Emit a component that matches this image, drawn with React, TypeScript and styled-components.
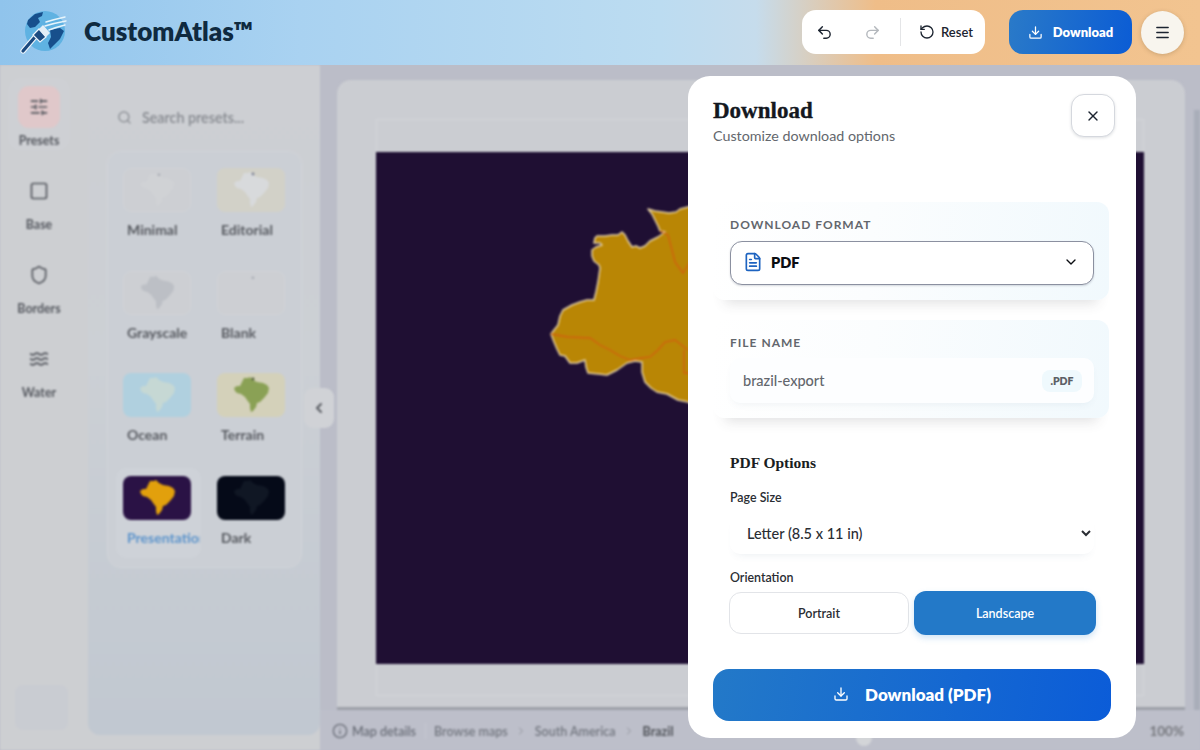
import React from "react";
import styled, { createGlobalStyle } from "styled-components";
import {
  ChevronDown, ChevronLeft, ChevronRight, Download, FileText, Info, Menu, Redo2, RotateCcw,
  Search, Shield, SlidersHorizontal, Square, Undo2, Waves, X,
} from "lucide-react";

const UI = `Lato, "Open Sans", sans-serif`;
const SERIF = `"Liberation Serif", "DejaVu Serif", serif`;

const Global = createGlobalStyle`
  html, body { margin: 0; padding: 0; overflow: hidden; }
  body { font-family: ${UI}; }
  * { box-sizing: border-box; }
`;

const Page = styled.div`
  position: relative;
  width: 1200px;
  height: 750px;
  overflow: hidden;
  display: flex;
  flex-direction: column;
  background: #bbbdc8;
`;

/* ---------- header ---------- */
const Header = styled.header`
  position: relative;
  z-index: 3;
  flex: 0 0 65px;
  display: flex;
  align-items: center;
  padding: 0 16px 1px 20px;
  background: linear-gradient(90deg, #90c4ec 0%, #a9d2f1 25%, #bcdcf1 55%, #c6dcec 63%, #efbd88 73%, #f2c490 100%);
`;
const Brand = styled.div`
  display: flex;
  align-items: center;
  gap: 17px;
  flex: 1;
`;
const Title = styled.span`
  margin-top: -2px;
  font-size: 26px;
  font-weight: 800;
  color: #0f2a40;
`;
const ToolGroup = styled.div`
  display: flex;
  align-items: center;
  width: 183px;
  height: 44px;
  background: #fff;
  border-radius: 14px;
  margin-right: 24px;
  color: #1c2430;
`;
const ToolIcon = styled.span<{ $dim?: boolean }>`
  display: flex;
  justify-content: center;
  width: 44px;
  margin-right: 4px;
  color: ${(p) => (p.$dim ? "#b4b8bd" : "#1c2430")};
`;
const ToolDivider = styled.span`
  width: 1px;
  height: 28px;
  background: #e4e5e7;
  margin: 0 18px 0 2px;
`;
const ResetLabel = styled.span`
  font-size: 13px;
  font-weight: 600;
  margin-left: 6px;
`;
const PrimaryButton = styled.button`
  display: flex;
  align-items: center;
  justify-content: center;
  gap: 10px;
  width: 123px;
  height: 44px;
  border: 0;
  border-radius: 14px;
  color: #fff;
  font: 800 13px ${UI};
  background: linear-gradient(100deg, #2a7ac8, #0b5cd5);
`;
const MenuButton = styled.button`
  display: flex;
  align-items: center;
  justify-content: center;
  width: 43px;
  height: 43px;
  margin-left: 9px;
  border: 0;
  border-radius: 50%;
  color: #1c2430;
  background: #f8f5ee;
  box-shadow: 0 1px 4px rgba(90, 70, 40, 0.25);
`;

/* ---------- blurred workspace ---------- */
const Workspace = styled.div`
  flex: 1;
  display: flex;
  min-height: 0;
  filter: blur(1.25px);
`;
const Sidebar = styled.aside`
  position: relative;
  flex: 0 0 320px;
  display: flex;
  background: #cdcfd2;
`;
const Rail = styled.nav`
  flex: 0 0 88px;
  display: flex;
  flex-direction: column;
  padding: 13px 8px 0 8px;
`;
const RailItem = styled.div<{ $active?: boolean }>`
  display: flex;
  flex-direction: column;
  align-items: center;
  width: 62px;
  height: 72px;
  margin-bottom: 12px;
  padding-top: 8px;
  border-radius: 12px;
  color: #55585f;
  background: ${(p) => (p.$active ? "#ced0d4" : "transparent")};
`;
const RailIcon = styled.span<{ $active?: boolean }>`
  display: flex;
  align-items: center;
  justify-content: center;
  width: 42px;
  height: 42px;
  border-radius: 11px;
  background: ${(p) => (p.$active ? "#e0c8ca" : "transparent")};
`;
const RailLabel = styled.span`
  margin-top: 5px;
  font-size: 12.4px;
  font-weight: 700;
  color: #55585f;
`;
const RailFoot = styled.div`
  position: absolute;
  left: 15px;
  bottom: 20px;
  width: 53px;
  height: 45px;
  border-radius: 8px;
  background: #c9ccd2;
`;
const PresetPanel = styled.section`
  flex: 0 0 232px;
  height: 670px;
  padding: 41px 18px 0 19px;
  border-radius: 0 0 12px 12px;
  background: linear-gradient(180deg, #cdcfd3 0%, #ccd0d5 45%, #c1c8d1 100%);
`;
const SearchRow = styled.div`
  display: flex;
  align-items: center;
  gap: 10px;
  height: 22px;
  padding-left: 10px;
  font-size: 14.3px;
  font-weight: 600;
  color: #85888e;
`;
const PresetCard = styled.div`
  display: grid;
  grid-template-columns: 94px 94px;
  grid-auto-rows: 102.7px;
  width: 195px;
  height: 417px;
  margin-top: 23px;
  padding: 8px 0 0 8px;
  border: 1px solid #d1d4d9;
  border-radius: 14px;
  background: #cbcfd5;
`;
const Tile = styled.div<{ $active?: boolean }>`
  width: 85px;
  height: 90px;
  padding: 8px 0 0 7px;
  border-radius: 10px;
  overflow: hidden;
  background: ${(p) => (p.$active ? "#ced2d8" : "transparent")};
`;
const Thumb = styled.svg<{ $bg: string; $outlined?: boolean }>`
  display: block;
  width: 68px;
  height: 44px;
  border-radius: 8px;
  background: ${(p) => p.$bg};
  border: ${(p) => (p.$outlined ? "1px solid #d1d3d7" : "0")};
`;
const TileLabel = styled.div<{ $active?: boolean }>`
  width: 73px;
  margin: 9px 0 0 4px;
  overflow: hidden;
  white-space: nowrap;
  font-size: 14px;
  font-weight: 700;
  color: ${(p) => (p.$active ? "#5b93cb" : "#575a60")};
`;
const CollapseHandle = styled.div`
  position: absolute;
  left: 304px;
  top: 323px;
  z-index: 1;
  width: 30px;
  height: 40px;
  display: flex;
  align-items: center;
  justify-content: center;
  border-radius: 9px;
  color: #585b62;
  background: #d0d2d6;
`;

const Stage = styled.main`
  flex: 1;
  display: flex;
  flex-direction: column;
  min-width: 0;
`;
const StageRow = styled.div`
  flex: 1;
  display: flex;
  min-height: 0;
  padding: 15px 0 0 17px;
`;
const CanvasPanel = styled.div`
  width: 848px;
  height: 630px;
  padding: 39px 0 0 39px;
  border-radius: 14px 14px 0 0;
  border-bottom: 3px solid #9da0a8;
  background: #cbcdd2;
`;
const Paper = styled.div`
  width: 768px;
  height: 577px;
  padding-top: 32px;
  border: 1px solid #d3d5d9;
`;
const MapSvg = styled.svg`
  display: block;
  width: 768px;
  height: 512px;
  margin-left: -1px;
  background: #1f0f33;
`;
const ScrollStrip = styled.div`
  width: 6px;
  height: 620px;
  margin: 30px 0 0 9px;
  background: #a9aeb9;
`;
const StatusBar = styled.footer`
  position: relative;
  flex: 0 0 40px;
  display: flex;
  align-items: center;
  padding: 2px 16px 0 12px;
  font-size: 12.5px;
  font-weight: 600;
  color: #6a6e78;
  background: #bdbfca;
`;
const Crumb = styled.span<{ $strong?: boolean }>`
  color: ${(p) => (p.$strong ? "#505359" : "#72767f")};
  font-weight: ${(p) => (p.$strong ? 700 : 600)};
`;
const CrumbSep = styled.span`
  display: flex;
  margin: 0 7.5px;
  color: #92959d;
`;
const MapDetails = styled.span`
  display: flex;
  align-items: center;
  gap: 4px;
  padding-right: 9px;
  margin-right: 8px;
  border-right: 1px solid #c6c8d1;
`;
const ZoomValue = styled.span`
  margin-left: auto;
  font-size: 13.5px;
  font-weight: 700;
  color: #77797f;
`;
const ZoomThumb = styled.span`
  position: absolute;
  left: 536px;
  top: 20px;
  width: 16px;
  height: 16px;
  border-radius: 50%;
  background: #d3d5d8;
`;

/* ---------- modal ---------- */
const Backdrop = styled.div`
  position: absolute;
  z-index: 2;
  inset: 65px 0 0 0;
  display: flex;
  justify-content: flex-end;
  align-items: flex-start;
  padding: 11px 64px 0 0;
`;
const Modal = styled.div`
  width: 448px;
  height: 662px;
  display: flex;
  flex-direction: column;
  border-radius: 22px;
  background: #fff;
  overflow: hidden;
`;
const ModalHead = styled.div`
  flex: 0 0 100px;
  display: flex;
  justify-content: space-between;
  padding: 18px 21px 0 25px;
`;
const ModalTitle = styled.h2`
  margin: 2px 0 0;
  font: 700 23px/30px ${SERIF};
  color: #14181f;
  -webkit-text-stroke: 0.35px #14181f;
`;
const ModalSub = styled.p`
  margin: 1px 0 0;
  font-size: 14.3px;
  line-height: 18px;
  color: #63676d;
`;
const CloseButton = styled.button`
  display: flex;
  align-items: center;
  justify-content: center;
  width: 44px;
  height: 43px;
  border: 1px solid #d5d8de;
  border-radius: 13px;
  color: #1c2430;
  background: #fff;
  box-shadow: 0 1px 3px rgba(30, 40, 60, 0.14);
`;
const ModalBody = styled.div`
  flex: 1;
  min-height: 0;
  overflow: hidden;
  padding: 26px 27px 0 25px;
`;
const FieldCard = styled.section`
  height: 98px;
  margin-bottom: 20px;
  padding: 14px 15px 0 17px;
  border-radius: 12px;
  background: linear-gradient(95deg, #ffffff 0%, #fbfdfe 40%, #f1f9fd 100%);
  box-shadow: 0 15px 12px -12px rgba(60, 60, 70, 0.16);
`;
const FieldLabel = styled.div`
  height: 17px;
  margin-bottom: 8px;
  font-size: 12px;
  line-height: 17px;
  font-weight: 700;
  letter-spacing: 1px;
  text-transform: uppercase;
  color: #63676d;
`;
const FormatSelect = styled.div`
  display: flex;
  align-items: center;
  height: 44px;
  padding: 0 14px 2px 12px;
  border: 1px solid #8b90a0;
  border-radius: 12px;
  color: #0b0d12;
  background: #fff;
  box-shadow: 0 1px 2px rgba(60, 70, 90, 0.2);
`;
const FormatName = styled.span`
  flex: 1;
  margin-left: 8px;
  font-size: 14.5px;
  font-weight: 800;
`;
const NameField = styled.div`
  display: flex;
  align-items: center;
  height: 45px;
  margin-top: -1px;
  padding: 0 12px 0 13px;
  border-radius: 10px;
  background: #fdfeff;
  box-shadow: 0 4px 8px -4px rgba(70, 100, 130, 0.1);
`;
const NameInput = styled.input`
  flex: 1;
  min-width: 0;
  padding: 0;
  border: 0;
  outline: 0;
  background: transparent;
  font: 500 14.5px ${UI};
  color: #63676d;
`;
const Badge = styled.span`
  width: 40px;
  height: 22px;
  border-radius: 8px;
  text-align: center;
  font-size: 10.5px;
  font-weight: 800;
  line-height: 22px;
  color: #5c6066;
  background: #eff9fd;
`;
const OptionsTitle = styled.h3`
  margin: 35px 0 0 17px;
  font: 700 15.5px/20px ${SERIF};
  color: #1a1d22;
`;
const OptionLabel = styled.div<{ $top: number }>`
  margin: ${(p) => p.$top}px 0 0 17px;
  height: 16px;
  font-size: 12.4px;
  line-height: 16px;
  font-weight: 600;
  color: #2a2d33;
`;
const SizeSelect = styled.select`
  display: block;
  width: 364px;
  height: 41px;
  margin: 7px 0 0 17px;
  padding: 0 4px 0 13px;
  border: 0;
  outline: 0;
  border-radius: 10px;
  font: 500 14.5px ${UI};
  color: #2a2d33;
  background: #fff;
  box-shadow: 0 6px 8px -6px rgba(90, 120, 150, 0.14);
`;
const OrientationRow = styled.div`
  display: flex;
  align-items: center;
  gap: 5px;
  margin: 5px 0 0 16px;
`;
const OrientationButton = styled.button<{ $on?: boolean }>`
  width: ${(p) => (p.$on ? 182 : 180)}px;
  height: ${(p) => (p.$on ? 44 : 42)}px;
  border: ${(p) => (p.$on ? "0" : "1px solid #e2e4e8")};
  border-radius: 12px;
  font: 600 12.5px ${UI};
  color: ${(p) => (p.$on ? "#fff" : "#2a2d33")};
  background: ${(p) => (p.$on ? "#2379c8" : "#fff")};
  box-shadow: ${(p) => (p.$on ? "0 3px 6px rgba(40, 130, 210, 0.22)" : "none")};
`;
const ModalFoot = styled.div`
  flex: 0 0 69px;
  padding: 0 25px;
`;
const SubmitButton = styled.button`
  display: flex;
  align-items: center;
  justify-content: center;
  gap: 16px;
  width: 398px;
  height: 52px;
  padding: 0 0 2px;
  border: 0;
  border-radius: 16px;
  font: 800 17px ${UI};
  color: #fff;
  background: linear-gradient(100deg, #2379c8, #0b5cd8);
`;

const BRAZIL = "M17 15 L20 13 L23 13 L25 9 L27 5 L31 5 L33 4 L36 7 L40 9 L46 10 L50 12 L52 15 L51 20 L47 25 L43 29 L40 30 L39 34 L36 38 L34 39 L33 35 L33 31 L30 27 L28 24 L24 21 L20 20 L18 18 Z";

const presets = [
  { name: "Minimal", bg: "#cdcfd3", land: "#d0d2d5", dot: "#a9acb4", outlined: true },
  { name: "Editorial", bg: "#d2d1c8", land: "#d8dadc", dot: "#7d8296" },
  { name: "Grayscale", bg: "#cdcfd3", land: "#bcbfc5", outlined: true },
  { name: "Blank", bg: "#cdcfd3", dot: "#a9acb4", outlined: true },
  { name: "Ocean", bg: "#b0d0df", land: "#c6d8d4" },
  { name: "Terrain", bg: "#d4d1ba", land: "#8aa155", dot: "#4e5a33" },
  { name: "Presentation", bg: "#2a1245", land: "#e2a00c", active: true },
  { name: "Dark", bg: "#050a18", land: "#101724" },
];

const rail = [
  { label: "Presets", Icon: SlidersHorizontal, active: true },
  { label: "Base", Icon: Square },
  { label: "Borders", Icon: Shield },
  { label: "Water", Icon: Waves },
];

const Logo = () => (
  <svg width="47" height="46" viewBox="0 0 47 46" aria-hidden="true">
    <circle cx="25" cy="22" r="20" fill="#5fb2e2" />
    <path d="M8 11 L15 5 L23 3 L22 7 L18 9 L20 13 L15 18 L10 19 L7 15 Z" fill="#174f8c" />
    <path d="M30 21 L40 19 L44 22 L40 30 L34 36 L30 40 L28 34 L31 28 Z" fill="#174f8c" />
    <path d="M26 13 Q36 10 45 8 M25 17 Q35 14 46 12 M29 21 Q37 18 45 16" fill="none" stroke="#e6f4fb" strokeWidth="1.5" strokeLinecap="round" />
    <path d="M3 42 L15 28" stroke="#eef5fb" strokeWidth="5.4" strokeLinecap="round" />
    <path d="M3 42 L15 28" stroke="#1b4a80" strokeWidth="3.2" strokeLinecap="round" />
    <path d="M13 26 L19 20 L26 28 L20 33 Z" fill="#1b4a80" stroke="#eef5fb" strokeWidth="1.2" />
    <path d="M19 20 L23 16 L30 24 L26 28 Z" fill="#e3eef6" />
  </svg>
);

export default function App() {
  return (
    <Page>
      <Global />
      <Header>
        <Brand>
          <Logo />
          <Title>CustomAtlas™</Title>
        </Brand>
        <ToolGroup>
          <ToolIcon><Undo2 size={17} /></ToolIcon>
          <ToolIcon $dim><Redo2 size={17} /></ToolIcon>
          <ToolDivider />
          <RotateCcw size={16} />
          <ResetLabel>Reset</ResetLabel>
        </ToolGroup>
        <PrimaryButton><Download size={15} />Download</PrimaryButton>
        <MenuButton><Menu size={17} /></MenuButton>
      </Header>

      <Workspace>
        <Sidebar>
          <Rail>
            {rail.map(({ label, Icon, active }) => (
              <RailItem key={label} $active={active}>
                <RailIcon $active={active}><Icon size={20} /></RailIcon>
                <RailLabel>{label}</RailLabel>
              </RailItem>
            ))}
          </Rail>
          <RailFoot />
          <PresetPanel>
            <SearchRow><Search size={15} />Search presets...</SearchRow>
            <PresetCard>
              {presets.map((p) => (
                <Tile key={p.name} $active={p.active}>
                  <Thumb viewBox="0 0 68 44" $bg={p.bg} $outlined={p.outlined}>
                    {p.land && <path d={BRAZIL} fill={p.land} />}
                    {p.dot && <circle cx="36" cy="6" r="1.4" fill={p.dot} />}
                  </Thumb>
                  <TileLabel $active={p.active}>{p.name}</TileLabel>
                </Tile>
              ))}
            </PresetCard>
          </PresetPanel>
          <CollapseHandle><ChevronLeft size={16} strokeWidth={3} /></CollapseHandle>
        </Sidebar>

        <Stage>
          <StageRow>
            <CanvasPanel>
              <Paper>
                <MapSvg viewBox="376 152 768 512">
                  <path
                    d="M700 204 L688 207 L680 209 L676 212 L669 213 L662 212 L655 211 L648 209 L652 214 L655 220 L658 226 L660 231 L665 232 L658 237 L650 241 L645 246 L640 248 L636 246 L632 247 L628 241 L625 235 L622 232 L618 235 L612 235 L605 236 L597 236 L595 238 L594 243 L600 243 L602 245 L596 247 L592 250 L592 256 L594 261 L599 265 L600 268 L598 282 L596 292 L594 300 L587 300 L580 302 L572 305 L563 310 L560 316 L558 325 L554 330 L551 334 L554 342 L557 349 L560 355 L565 356 L570 363 L577 363 L585 360 L586 367 L588 373 L598 374 L607 375 L617 370 L627 363 L635 361 L642 362 L642 372 L645 382 L651 388 L657 392 L667 394 L678 400 L688 402 L700 408 Z"
                    fill="#b98605"
                    stroke="#e6d3a8"
                    strokeWidth="1.5"
                    strokeLinejoin="round"
                  />
                  <path
                    d="M551 334 L568 337 L590 338 L600 345 L610 350 L620 356 L630 360 L642 358 L650 357 L658 350 L665 342 L675 340 L688 350 M660 231 L668 235 L672 250 L675 262 L683 273 L690 262 M684 350 L684 373 L690 373"
                    fill="none"
                    stroke="#d2600f"
                    strokeWidth="1.3"
                  />
                </MapSvg>
              </Paper>
            </CanvasPanel>
            <ScrollStrip />
          </StageRow>
          <StatusBar>
            <MapDetails><Info size={16} />Map details</MapDetails>
            <Crumb>Browse maps</Crumb>
            <CrumbSep><ChevronRight size={12} /></CrumbSep>
            <Crumb>South America</Crumb>
            <CrumbSep><ChevronRight size={12} /></CrumbSep>
            <Crumb $strong>Brazil</Crumb>
            <ZoomThumb />
            <ZoomValue>100%</ZoomValue>
          </StatusBar>
        </Stage>
      </Workspace>

      <Backdrop>
        <Modal>
          <ModalHead>
            <div>
              <ModalTitle>Download</ModalTitle>
              <ModalSub>Customize download options</ModalSub>
            </div>
            <CloseButton><X size={16} /></CloseButton>
          </ModalHead>
          <ModalBody>
            <FieldCard>
              <FieldLabel>Download format</FieldLabel>
              <FormatSelect>
                <FileText size={20} color="#1d63c0" />
                <FormatName>PDF</FormatName>
                <ChevronDown size={16} />
              </FormatSelect>
            </FieldCard>
            <FieldCard>
              <FieldLabel>File name</FieldLabel>
              <NameField>
                <NameInput defaultValue="brazil-export" />
                <Badge>.PDF</Badge>
              </NameField>
            </FieldCard>
            <OptionsTitle>PDF Options</OptionsTitle>
            <OptionLabel $top={17}>Page Size</OptionLabel>
            <SizeSelect defaultValue="letter">
              <option value="letter">Letter (8.5 x 11 in)</option>
              <option value="a4">A4 (210 x 297 mm)</option>
            </SizeSelect>
            <OptionLabel $top={16}>Orientation</OptionLabel>
            <OrientationRow>
              <OrientationButton>Portrait</OrientationButton>
              <OrientationButton $on>Landscape</OrientationButton>
            </OrientationRow>
          </ModalBody>
          <ModalFoot>
            <SubmitButton><Download size={16} />Download (PDF)</SubmitButton>
          </ModalFoot>
        </Modal>
      </Backdrop>
    </Page>
  );
}
